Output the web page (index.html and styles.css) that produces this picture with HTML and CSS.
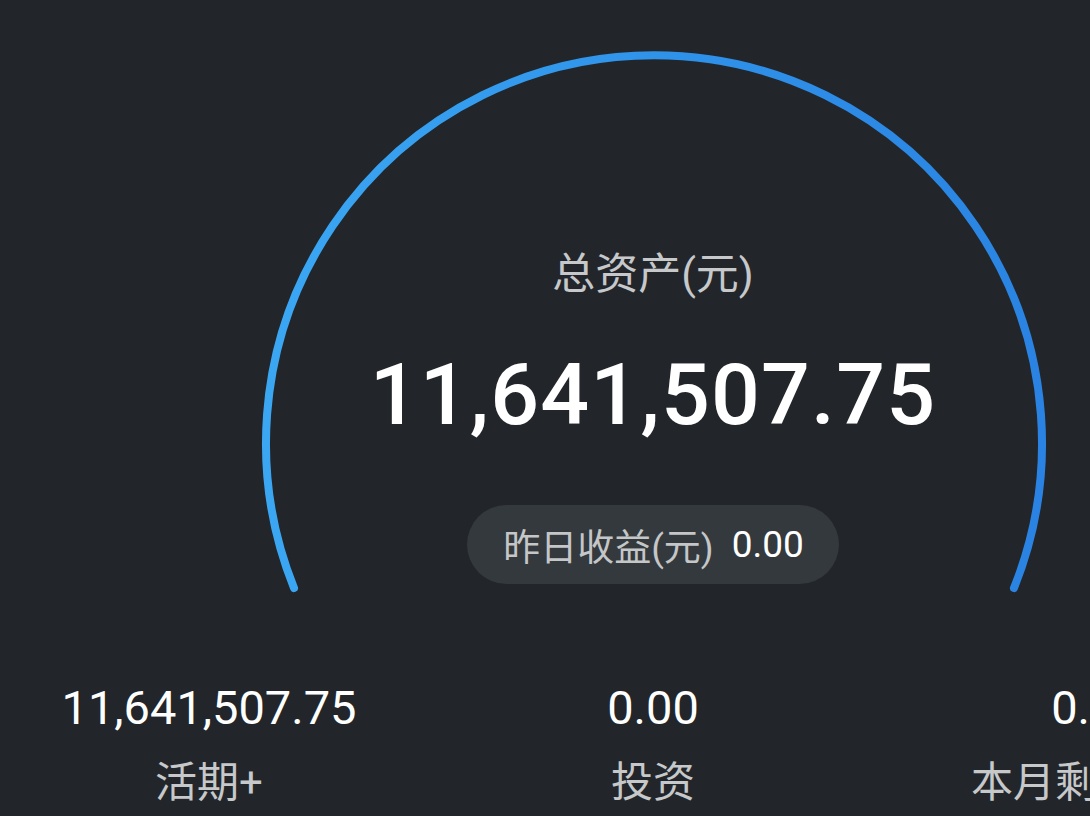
FILE: index.html
```html
<!DOCTYPE html>
<html lang="zh-CN">
<head>
<meta charset="utf-8">
<title>总资产</title>
<link rel="stylesheet" href="styles.css">
</head>
<body>
<div class="screen">
  <div class="canvas">
    <section class="gauge">
      <svg class="gauge-arc" width="1332" height="640" viewBox="0 0 1332 640" aria-hidden="true">
        <defs>
          <linearGradient id="arcGrad" x1="0" y1="0" x2="1" y2="0">
            <stop offset="0" stop-color="#3ba7f3"/>
            <stop offset="0.5" stop-color="#2f93ea"/>
            <stop offset="1" stop-color="#2a83e2"/>
          </linearGradient>
        </defs>
        <path d="M 307 588 A 388 388 0 1 1 1027 588" fill="none" stroke="url(#arcGrad)" stroke-width="8" stroke-linecap="round"/>
      </svg>
      <div class="gauge-body">
        <div class="gauge-title">总资产(元)</div>
        <div class="gauge-total">11,641,507.75</div>
        <div class="pill">
          <span class="pill-label">昨日收益(元)</span>
          <span class="pill-value">0.00</span>
        </div>
      </div>
    </section>
    <section class="stats">
      <div class="stat">
        <div class="stat-value">11,641,507.75</div>
        <div class="stat-label">活期+</div>
      </div>
      <div class="stat">
        <div class="stat-value">0.00</div>
        <div class="stat-label">投资</div>
      </div>
      <div class="stat">
        <div class="stat-value">0.00</div>
        <div class="stat-label">本月剩余额度</div>
      </div>
    </section>
  </div>
</div>
</body>
</html>
```

FILE: styles.css
```css
html, body {
  margin: 0;
  padding: 0;
  background: #22262a;
}
body {
  width: 1090px;
  height: 816px;
  overflow: hidden;
  font-family: Roboto, "Noto Sans CJK SC", sans-serif;
  color: #ffffff;
}
.screen {
  width: 1090px;
  height: 816px;
  overflow: hidden;
}
.canvas {
  width: 1332px;
  margin-left: -13px;
}
.gauge {
  position: relative;
  height: 640px;
}
.gauge-arc {
  position: absolute;
  top: 0;
  left: 0;
}
.gauge-body {
  position: relative;
  display: flex;
  flex-direction: column;
  align-items: center;
  padding-top: 253px;
}
.gauge-title {
  font-size: 43px;
  line-height: 42px;
  color: #c6c8ca;
}
.gauge-total {
  margin-top: 57px;
  font-size: 86px;
  line-height: 86px;
  font-weight: 500;
  letter-spacing: 1.2px;
  color: #ffffff;
}
.pill {
  margin-top: 67px;
  height: 79px;
  box-sizing: border-box;
  padding: 0 35px 0 36px;
  border-radius: 40px;
  background: #34393d;
  display: flex;
  align-items: center;
  gap: 18px;
}
.pill-label {
  font-size: 37px;
  color: #c4c6c8;
}
.pill-value {
  font-size: 37px;
  color: #ffffff;
}
.stats {
  display: grid;
  grid-template-columns: repeat(3, 444px);
  padding-top: 46px;
}
.stat {
  display: flex;
  flex-direction: column;
  align-items: center;
  white-space: nowrap;
}
.stat-value {
  font-size: 47px;
  line-height: 44px;
  color: #ffffff;
}
.stat-label {
  margin-top: 32px;
  font-size: 42px;
  line-height: 42px;
  color: #c6c8ca;
}
```
